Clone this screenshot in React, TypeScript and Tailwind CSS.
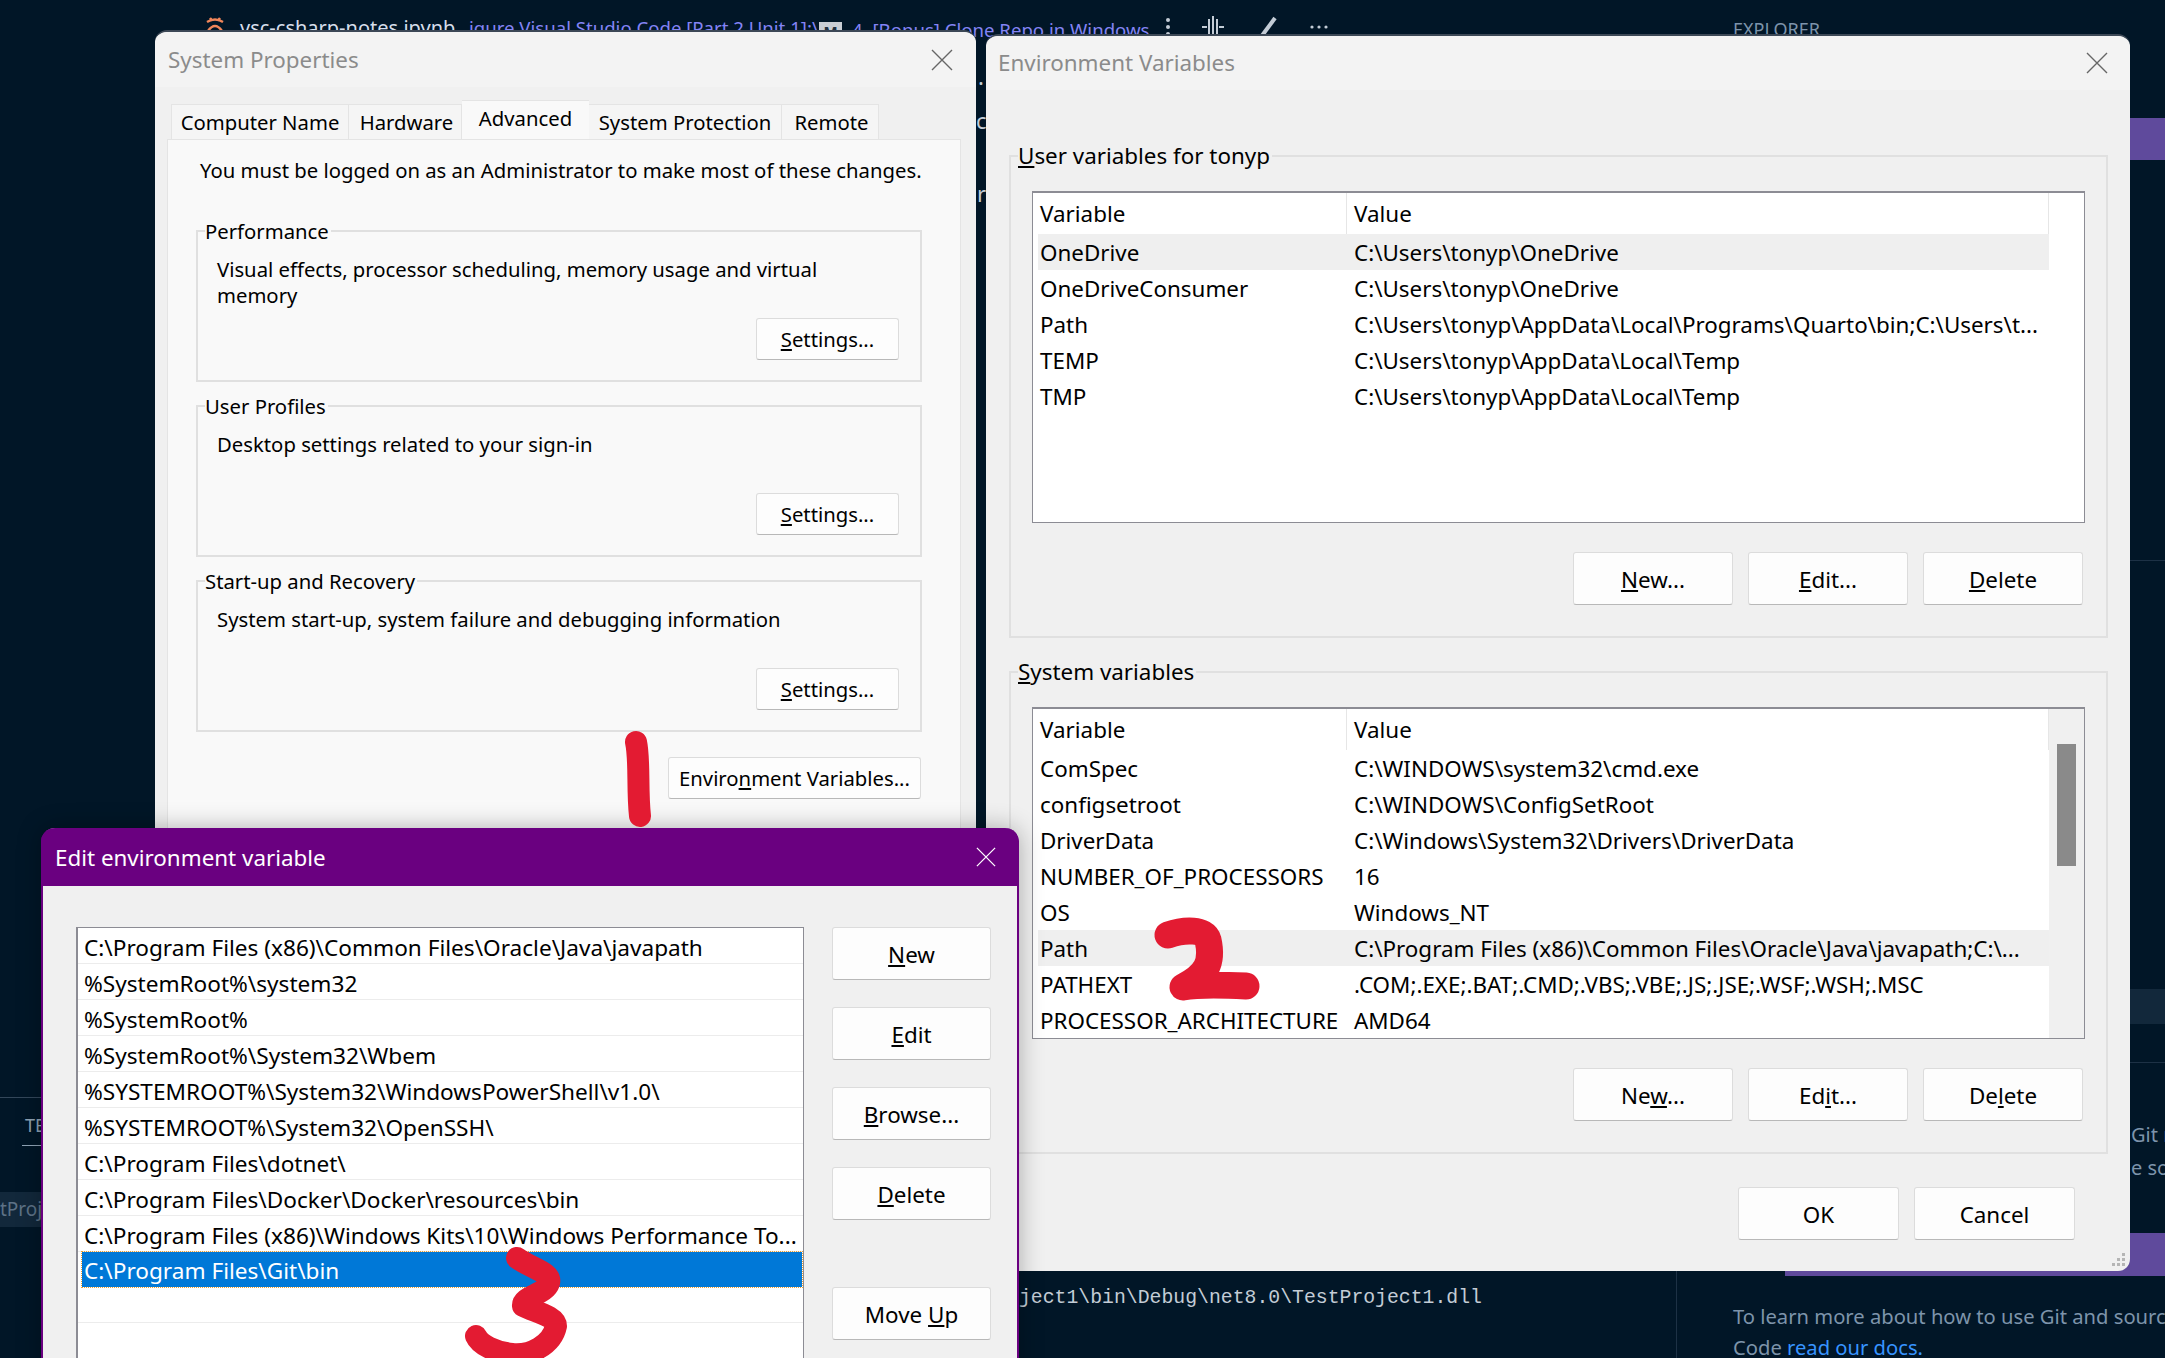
import type { ReactNode } from 'react';

const uiFont = 'font-["Noto_Sans","Open_Sans",sans-serif]';

const userRows = [
  ['OneDrive', 'C:\\Users\\tonyp\\OneDrive'],
  ['OneDriveConsumer', 'C:\\Users\\tonyp\\OneDrive'],
  ['Path', 'C:\\Users\\tonyp\\AppData\\Local\\Programs\\Quarto\\bin;C:\\Users\\t...'],
  ['TEMP', 'C:\\Users\\tonyp\\AppData\\Local\\Temp'],
  ['TMP', 'C:\\Users\\tonyp\\AppData\\Local\\Temp'],
];

const systemRows = [
  ['ComSpec', 'C:\\WINDOWS\\system32\\cmd.exe'],
  ['configsetroot', 'C:\\WINDOWS\\ConfigSetRoot'],
  ['DriverData', 'C:\\Windows\\System32\\Drivers\\DriverData'],
  ['NUMBER_OF_PROCESSORS', '16'],
  ['OS', 'Windows_NT'],
  ['Path', 'C:\\Program Files (x86)\\Common Files\\Oracle\\Java\\javapath;C:\\...'],
  ['PATHEXT', '.COM;.EXE;.BAT;.CMD;.VBS;.VBE;.JS;.JSE;.WSF;.WSH;.MSC'],
  ['PROCESSOR_ARCHITECTURE', 'AMD64'],
];

const pathEntries = [
  'C:\\Program Files (x86)\\Common Files\\Oracle\\Java\\javapath',
  '%SystemRoot%\\system32',
  '%SystemRoot%',
  '%SystemRoot%\\System32\\Wbem',
  '%SYSTEMROOT%\\System32\\WindowsPowerShell\\v1.0\\',
  '%SYSTEMROOT%\\System32\\OpenSSH\\',
  'C:\\Program Files\\dotnet\\',
  'C:\\Program Files\\Docker\\Docker\\resources\\bin',
  'C:\\Program Files (x86)\\Windows Kits\\10\\Windows Performance To...',
];

function CloseIcon({ className }: { className: string }) {
  return (
    <svg viewBox="0 0 22 22" className={className} fill="none" stroke="currentColor" strokeWidth="1.4">
      <path d="M1 1 L21 21 M21 1 L1 21" />
    </svg>
  );
}

function WinButton({ children, className }: { children: ReactNode; className: string }) {
  return (
    <div className={`flex items-center justify-center rounded-[3px] border border-[#dcdcdc] border-b-[#b8b8b8] bg-[#fdfdfd] text-black ${className}`}>
      {children}
    </div>
  );
}

function Group({ label, className, children }: { label: ReactNode; className: string; children: ReactNode }) {
  return (
    <div className={`relative border-2 border-[#e0e0e0] ${className}`}>
      <span className="absolute top-[-15px] left-[7px] bg-inherit pr-[2px] leading-[28px] text-black">{label}</span>
      {children}
    </div>
  );
}

function SettingsBox({ label, lines }: { label: string; lines: string[] }) {
  return (
    <Group label={label} className="flex h-[152px] w-[726px] flex-col bg-[#f9f9f9] pt-[24px] pl-[19px]">
      <div className="flex-1 text-[20.3px] leading-[26px] text-black">
        {lines.map((line) => (
          <div key={line}>{line}</div>
        ))}
      </div>
      <WinButton className="mr-[21px] mb-[20px] h-[42px] w-[143px] self-end text-[20.3px]">
        <span>
          <u>S</u>ettings...
        </span>
      </WinButton>
    </Group>
  );
}

function VarList({ rows, active, scroll }: { rows: string[][]; active: number; scroll?: boolean }) {
  return (
    <div className="relative mt-[34px] ml-[21px] flex h-[332px] w-[1053px] overflow-hidden border border-[#8c8c94] border-t-2 bg-white text-[22.4px] text-black">
      <div className="w-[1016px] pl-[5px]">
        <div className="flex h-[41px] items-center border-r border-[#e6e6e6]">
          <div className="w-[309px] border-r border-[#e6e6e6] pl-[2px] leading-[41px]">Variable</div>
          <div className="pl-[7px]">Value</div>
        </div>
        {rows.map((row, i) => (
          <div key={row[0]} className={`flex h-[36px] items-center pt-[1px] ${i === active ? 'bg-[#efefef]' : ''}`}>
            <div className="w-[309px] pl-[2px] whitespace-nowrap">{row[0]}</div>
            <div className="pl-[7px] whitespace-nowrap">{row[1]}</div>
          </div>
        ))}
      </div>
      {scroll && (
        <div className="flex flex-1 justify-center bg-[#f0f0f0] pt-[35px]">
          <div className="h-[122px] w-[19px] bg-[#8a8a8a]" />
        </div>
      )}
    </div>
  );
}

function VarButtons({ labels }: { labels: ReactNode[] }) {
  return (
    <div className="mt-[29px] mr-[23px] flex justify-end gap-[15px]">
      {labels.map((label, i) => (
        <WinButton key={i} className="h-[53px] w-[160px] pt-[2px] text-[22.4px]">
          {label}
        </WinButton>
      ))}
    </div>
  );
}

function BackgroundBits() {
  return (
    <>
      <svg viewBox="0 0 20 18" className="absolute top-[15px] left-[205px] h-[20px] w-[20px]" fill="none" stroke="#f0865a" strokeWidth="2.4">
        <path d="M2 6 Q10 1 18 6 M3 15 Q10 5 17 15 M5 2 L7 5 M15 2 L13 5" />
      </svg>
      <div className={`absolute top-[14px] left-[240px] w-[225px] text-[20px] leading-[28px] whitespace-nowrap text-[#d6deeb] ${uiFont}`}>vsc-csharp-notes.ipynb</div>
      <div className={`absolute top-[13px] left-[469px] text-[18.6px] leading-[30px] whitespace-nowrap text-[#8484f5] ${uiFont}`}>iqure Visual Studio Code [Part 2 Unit 1]:\</div>
      <div className="absolute top-[22px] left-[819px] h-[26px] w-[23px] bg-[#c9ced4] text-center text-[15px] leading-[18px] font-bold text-[#20303f]">M</div>
      <div className={`absolute top-[15px] left-[852px] text-[18.6px] leading-[30px] whitespace-nowrap text-[#8484f5] ${uiFont}`}>4. [Bonus] Clone Repo in Windows</div>
      <div className="absolute top-[15px] left-[1165px] flex items-center gap-[30px] text-[#c3ccd6]">
        <svg viewBox="0 0 6 20" className="h-[20px] w-[6px]" fill="currentColor">
          <circle cx="3" cy="3" r="2" />
          <circle cx="3" cy="10" r="2" />
          <circle cx="3" cy="17" r="2" />
        </svg>
        <svg viewBox="0 0 24 24" className="h-[24px] w-[24px]" fill="none" stroke="currentColor" strokeWidth="2">
          <path d="M12 1 V23 M8 4 V20 M16 4 V20 M1 12 H6 M18 12 H23" />
        </svg>
        <svg viewBox="0 0 24 24" className="h-[24px] w-[24px]" fill="none" stroke="currentColor" strokeWidth="4">
          <path d="M20 3 L6 22" />
        </svg>
        <svg viewBox="0 0 20 6" className="h-[6px] w-[20px]" fill="currentColor">
          <circle cx="3" cy="3" r="1.6" />
          <circle cx="10" cy="3" r="1.6" />
          <circle cx="17" cy="3" r="1.6" />
        </svg>
      </div>
      <div className={`absolute top-[15px] left-[1733px] text-[18px] leading-[28px] text-[#7d94ab] ${uiFont}`}>EXPLORER</div>

      <span className={`absolute top-[60px] left-[978px] text-[22px] text-[#c3ccd6] ${uiFont}`}>.</span>
      <span className={`absolute top-[104px] left-[976px] text-[22px] text-[#c3ccd6] ${uiFont}`}>c</span>
      <span className={`absolute top-[177px] left-[977px] text-[22px] text-[#c3ccd6] ${uiFont}`}>r</span>

      <div className="absolute top-[118px] left-[2100px] h-[42px] w-[65px] bg-[#5f4a9c]" />
      <div className="absolute top-[560px] left-[2100px] h-px w-[65px] bg-[#1d3145]" />
      <div className="absolute top-[989px] left-[2100px] h-[35px] w-[65px] bg-[#12283b]" />
      <div className="absolute top-[1062px] left-[2100px] h-px w-[65px] bg-[#1d3145]" />
      <div className={`absolute top-[1122px] left-[2131px] text-[20px] leading-[26px] whitespace-nowrap text-[#7d94ab] ${uiFont}`}>Git r</div>
      <div className={`absolute top-[1155px] left-[2131px] text-[20px] leading-[26px] whitespace-nowrap text-[#7d94ab] ${uiFont}`}>e so</div>
      <div className="absolute top-[1233px] left-[1785px] h-[43px] w-[380px] bg-[#5f4a9c]" />
      <div className="absolute top-[1271px] left-[1676px] h-[87px] w-px bg-[#1d3145]" />
      <div className={`absolute top-[1301px] left-[1733px] w-[440px] text-[20.2px] leading-[31px] whitespace-nowrap text-[#7d94ab] ${uiFont}`}>
        <div>To learn more about how to use Git and source</div>
        <div>
          Code <span className="text-[#3794ff]">read our docs.</span>
        </div>
      </div>
      <div className={'absolute top-[1284px] left-[1019px] font-["Liberation_Mono",monospace] text-[19.8px] leading-[28px] whitespace-nowrap text-[#c3ccd6]'}>
        ject1\bin\Debug\net8.0\TestProject1.dll
      </div>

      <div className="absolute top-[1097px] left-0 h-px w-[41px] bg-[#33475a]" />
      <div className={`absolute top-[1111px] left-[25px] text-[18px] leading-[28px] text-[#8fa3b5] ${uiFont}`}>TE</div>
      <div className="absolute top-[1145px] left-[22px] h-px w-[19px] bg-[#8fa3b5]" />
      <div className={`absolute top-[1192px] left-0 h-[35px] w-[41px] overflow-hidden bg-[#12283b] text-[19px] leading-[35px] text-[#5d7286] ${uiFont}`}>tProj</div>
    </>
  );
}

function SystemProperties() {
  return (
    <div className={`absolute top-[30px] left-[155px] h-[830px] w-[821px] rounded-t-[12px] border-t-2 border-[#3c4856] bg-[#f0f0f0] ${uiFont}`}>
      <div className="flex h-[55px] items-center justify-between rounded-t-[12px] bg-[#f3f3f3] pr-[23px] pl-[13px]">
        <span className="text-[22.4px] text-[#8b8b8b]">System Properties</span>
        <CloseIcon className="h-[22px] w-[22px] text-[#666666]" />
      </div>
      <div className="mt-[13px] flex h-[39px] items-end pl-[16px] text-[20.3px] text-black">
        <div className="flex h-[35px] w-[178px] items-center justify-center border border-b-0 border-[#e4e4e4] bg-[#f5f5f5]">Computer Name</div>
        <div className="flex h-[35px] w-[113px] items-center justify-center border-t border-r border-[#e4e4e4] bg-[#f5f5f5] pl-[3px]">Hardware</div>
        <div className="flex h-[39px] w-[127px] items-start justify-center border-t border-[#e4e4e4] bg-[#f9f9f9] pt-[2px]">Advanced</div>
        <div className="flex h-[35px] w-[193px] items-center justify-center border-t border-r border-[#e4e4e4] bg-[#f5f5f5]">System Protection</div>
        <div className="flex h-[35px] w-[97px] items-center justify-center border-t border-r border-[#e4e4e4] bg-[#f5f5f5] pl-[3px]">Remote</div>
      </div>
      <div className="ml-[12px] h-[700px] w-[794px] border border-[#e4e4e4] bg-[#f9f9f9] pt-[16px] pl-[28px]">
        <div className="pl-[4px] text-[20.3px] leading-[28px] whitespace-nowrap text-black">You must be logged on as an Administrator to make most of these changes.</div>
        <div className="mt-[46px] flex flex-col gap-[23px] text-[20.3px]">
          <SettingsBox label="Performance" lines={['Visual effects, processor scheduling, memory usage and virtual', 'memory']} />
          <SettingsBox label="User Profiles" lines={['Desktop settings related to your sign-in']} />
          <SettingsBox label="Start-up and Recovery" lines={['System start-up, system failure and debugging information']} />
        </div>
        <WinButton className="mt-[25px] ml-[472px] h-[42px] w-[253px] text-[20.3px]">
          <span>
            Enviro<u>n</u>ment Variables...
          </span>
        </WinButton>
      </div>
    </div>
  );
}

function EnvironmentVariables() {
  return (
    <div className={`absolute top-[34px] left-[986px] h-[1237px] w-[1144px] rounded-[12px] border-t-2 border-[#3c4856] bg-[#f0f0f0] ${uiFont}`}>
      <div className="flex h-[54px] items-center justify-between rounded-t-[12px] bg-[#f3f3f3] pr-[22px] pl-[12px]">
        <span className="text-[22.4px] text-[#8b8b8b]">Environment Variables</span>
        <CloseIcon className="h-[22px] w-[22px] text-[#666666]" />
      </div>
      <div className="flex flex-col gap-[33px] pt-[65px] pl-[23px] text-[22.4px]">
        <Group label={<><u>U</u>ser variables for tonyp</>} className="h-[483px] w-[1099px] bg-[#f0f0f0]">
          <VarList rows={userRows} active={0} />
          <VarButtons labels={[<span key="n"><u>N</u>ew...</span>, <span key="e"><u>E</u>dit...</span>, <span key="d"><u>D</u>elete</span>]} />
        </Group>
        <Group label={<><u>S</u>ystem variables</>} className="h-[483px] w-[1099px] bg-[#f0f0f0]">
          <VarList rows={systemRows} active={5} scroll />
          <VarButtons labels={[<span key="n">Ne<u>w</u>...</span>, <span key="e">Ed<u>i</u>t...</span>, <span key="d">De<u>l</u>ete</span>]} />
        </Group>
      </div>
      <div className="mt-[33px] mr-[55px] flex justify-end gap-[15px] text-[22.4px]">
        <WinButton className="h-[53px] w-[161px] pt-[2px]">OK</WinButton>
        <WinButton className="h-[53px] w-[161px] pt-[2px]">Cancel</WinButton>
      </div>
      <svg viewBox="0 0 14 14" className="absolute right-[4px] bottom-[4px] h-[14px] w-[14px]" fill="#b5b5b5">
        <rect x="10" y="0" width="3" height="3" />
        <rect x="5" y="5" width="3" height="3" />
        <rect x="10" y="5" width="3" height="3" />
        <rect x="0" y="10" width="3" height="3" />
        <rect x="5" y="10" width="3" height="3" />
        <rect x="10" y="10" width="3" height="3" />
      </svg>
    </div>
  );
}

function EditDialog() {
  return (
    <div className={`absolute top-[828px] left-[41px] h-[560px] w-[978px] rounded-t-[14px] border-x-2 border-[#6a0080] bg-[#f0f0f0] shadow-[0_0_24px_rgba(0,0,0,0.3)] ${uiFont}`}>
      <div className="mx-[-2px] flex h-[58px] items-center justify-between rounded-t-[14px] bg-[#6a0080] pr-[23px] pl-[14px] text-white">
        <span className="pt-[1px] text-[22.4px]">Edit environment variable</span>
        <CloseIcon className="h-[20px] w-[20px]" />
      </div>
      <div className="mt-[41px] ml-[33px] flex items-start gap-[28px] text-[22.6px] text-black">
        <div className="h-[480px] w-[728px] border-t border-l-2 border-r border-[#8c8c94] bg-white">
          {pathEntries.map((entry) => (
            <div key={entry} className="flex h-[36px] items-center border-b border-[#ececec] pt-[4px] pl-[6px] whitespace-nowrap">
              {entry}
            </div>
          ))}
          <div className="mr-[1px] ml-[4px] flex h-[35px] items-center bg-[#0078d7] pt-[3px] pl-[2px] whitespace-nowrap text-white outline-1 outline-dotted outline-[#f0a030]">
            C:\Program Files\Git\bin
          </div>
          <div className="h-[36px] border-b border-[#ececec]" />
        </div>
        <div className="flex w-[159px] flex-col gap-[27px] text-[22.4px]">
          <WinButton className="h-[53px] pt-[2px]"><span><u>N</u>ew</span></WinButton>
          <WinButton className="h-[53px] pt-[2px]"><span><u>E</u>dit</span></WinButton>
          <WinButton className="h-[53px] pt-[2px]"><span><u>B</u>rowse...</span></WinButton>
          <WinButton className="h-[53px] pt-[2px]"><span><u>D</u>elete</span></WinButton>
          <WinButton className="mt-[40px] h-[53px] pt-[2px]"><span>Move <u>U</u>p</span></WinButton>
        </div>
      </div>
    </div>
  );
}

// hand drawn red numbers on top of the windows
function Scribbles() {
  return (
    <svg viewBox="0 0 2165 1358" className="pointer-events-none absolute top-0 left-0 h-[1358px] w-[2165px]" fill="none" stroke="#e31b32" strokeWidth="22" strokeLinecap="round" strokeLinejoin="round">
      <path d="M636 742 C640 760 637 790 640 816" />
      <path d="M1168 935 C1185 929 1205 929 1208 940 C1213 962 1207 975 1183 987 C1200 984 1225 985 1246 986" strokeWidth="27" />
      <path d="M517 1258 C530 1268 552 1272 549 1283 C545 1295 522 1296 523 1306 C535 1312 556 1316 556 1326 C552 1345 530 1356 512 1354 C495 1352 480 1345 476 1336" strokeWidth="22" />
    </svg>
  );
}

export default function App() {
  return (
    <div className="relative h-[1358px] w-[2165px] overflow-hidden bg-[#011627]">
      <BackgroundBits />
      <SystemProperties />
      <EnvironmentVariables />
      <EditDialog />
      <Scribbles />
    </div>
  );
}
